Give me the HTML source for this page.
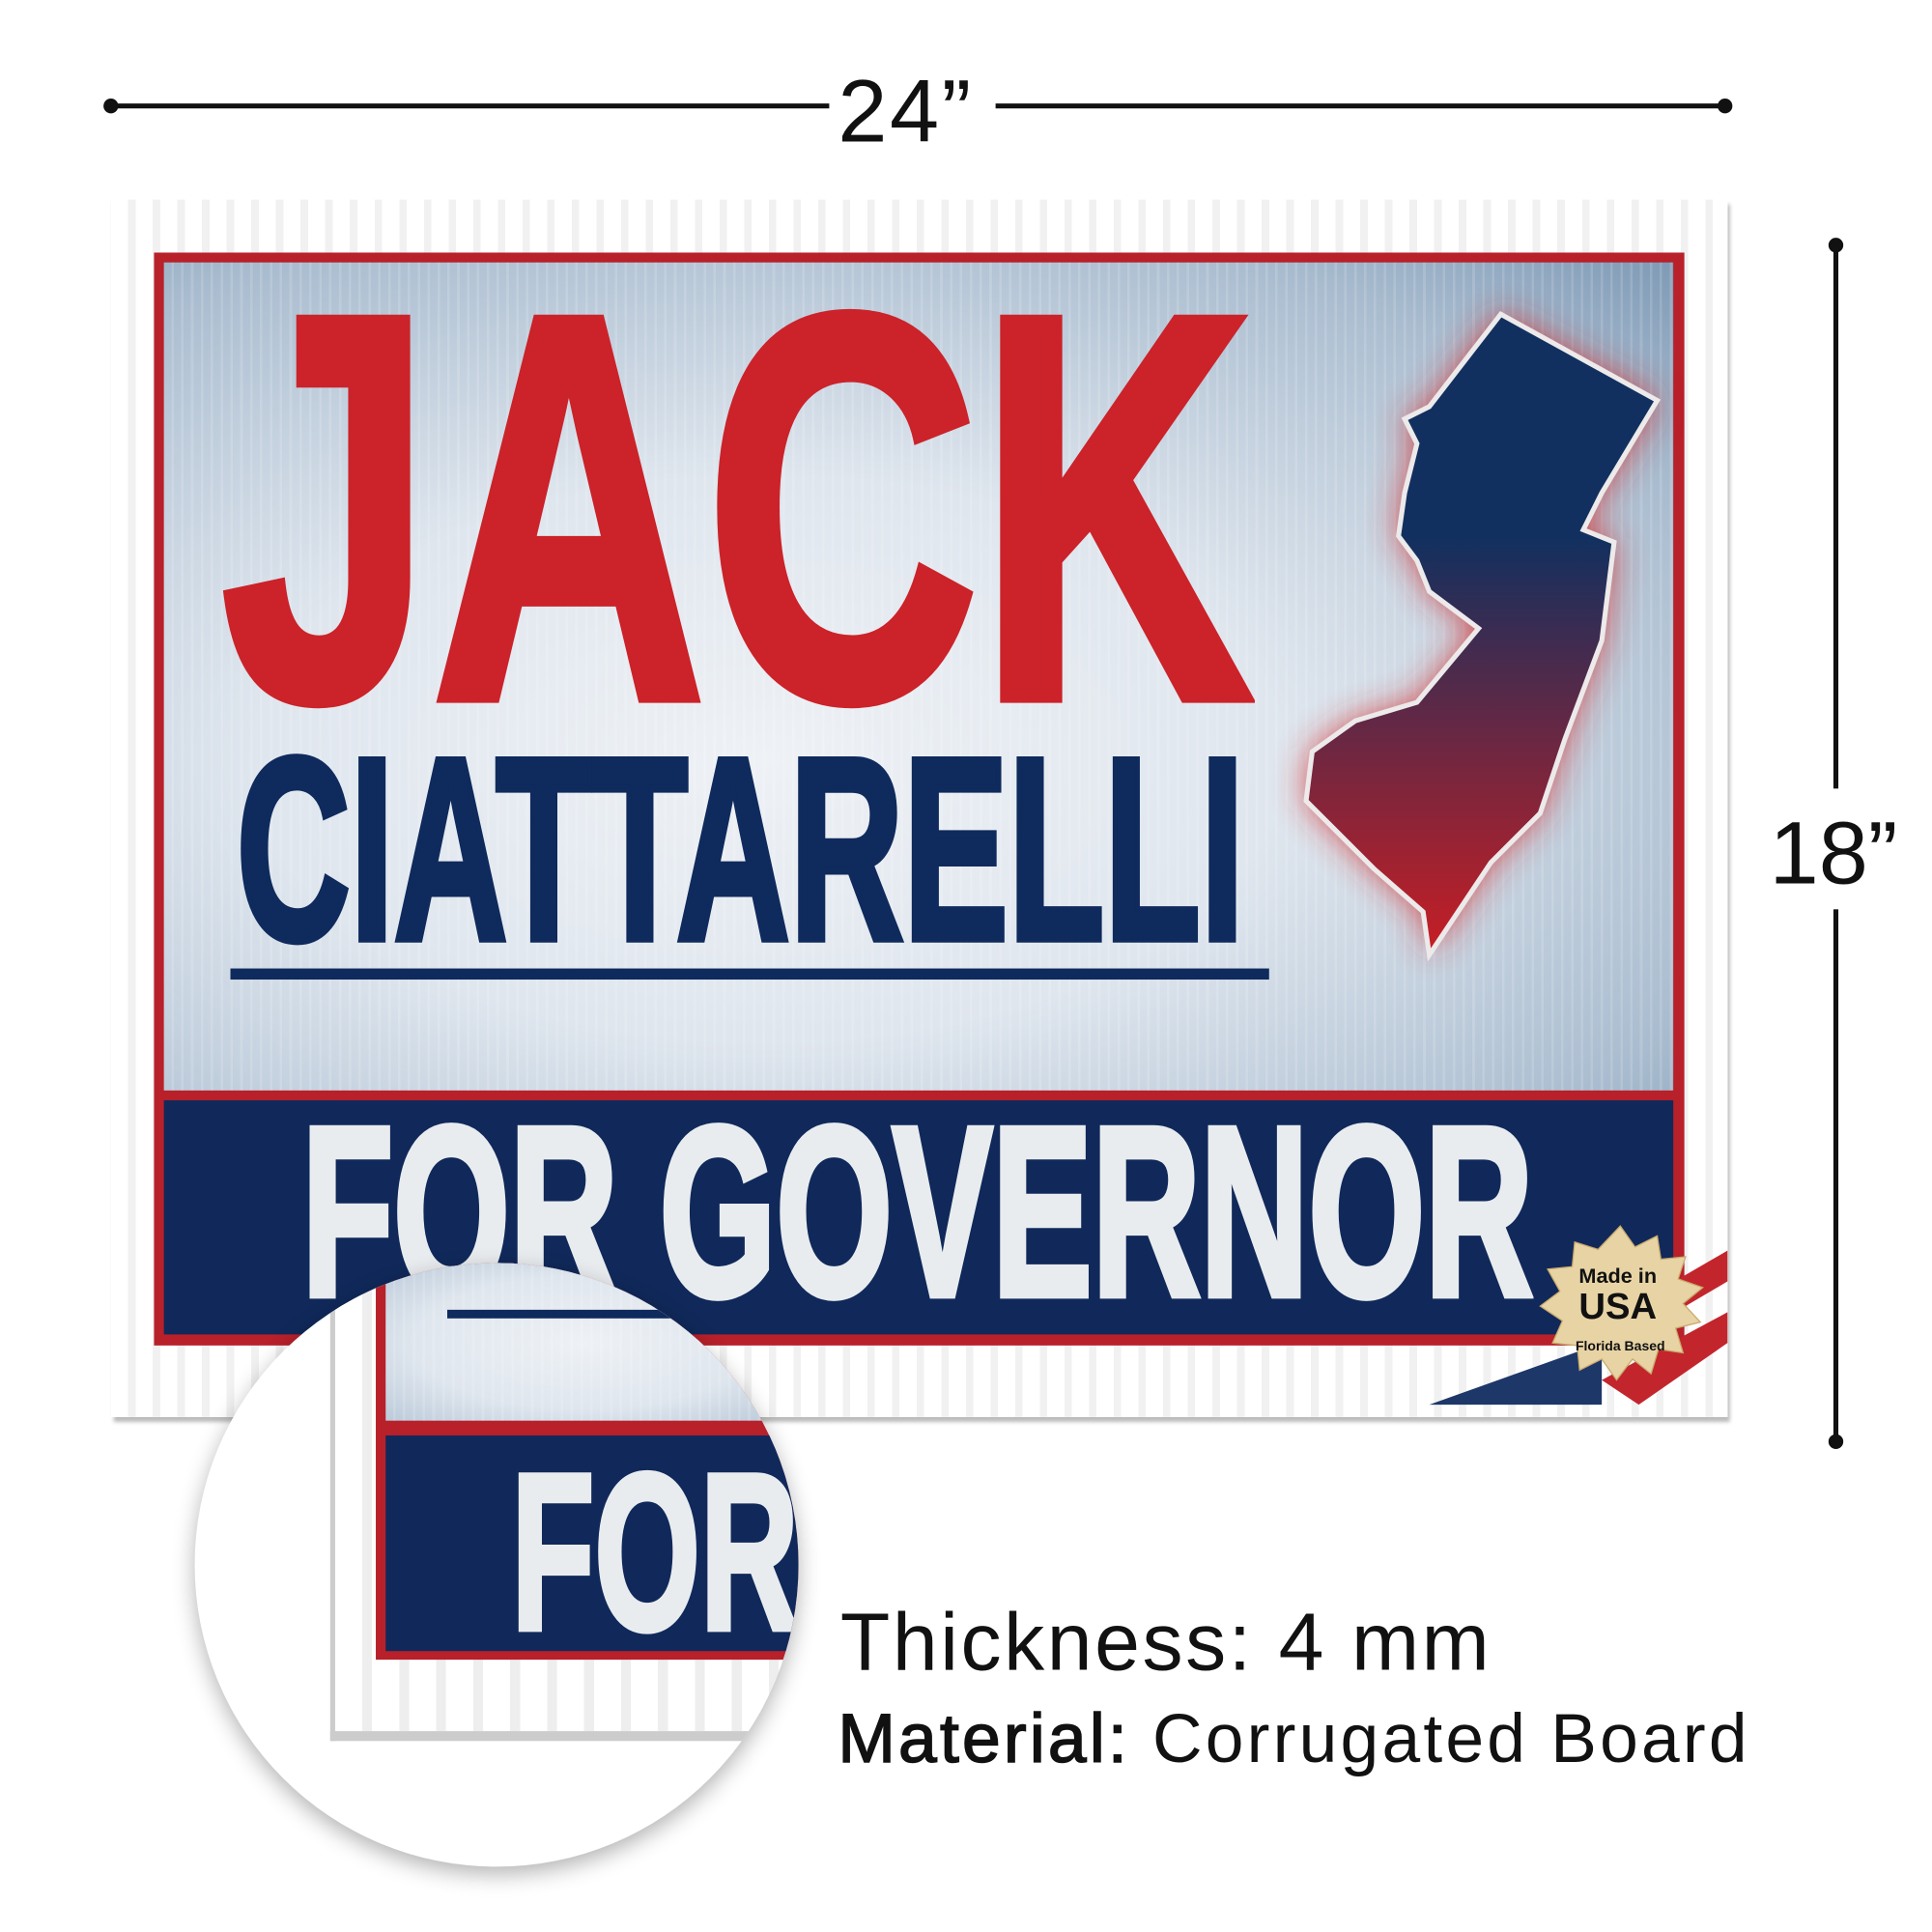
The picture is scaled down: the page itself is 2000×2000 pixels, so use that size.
<!DOCTYPE html>
<html><head><meta charset="utf-8"><style>
html,body{margin:0;padding:0;background:#fff;}
#root{position:relative;width:1568px;height:1568px;transform:scale(1.27551);transform-origin:0 0;overflow:hidden;font-family:"Liberation Sans",sans-serif;}
.abs{position:absolute;}
.big{font-weight:bold;white-space:nowrap;transform-origin:0 0;line-height:1;}
.tex{background:
 repeating-linear-gradient(90deg,rgba(255,255,255,0.0) 0 6px,rgba(255,255,255,0.15) 6px 8px),
 radial-gradient(ellipse at 40% 60%,#eef1f5 0%,#dfe6ee 40%,#a9bccf 80%,#7f9ab6 100%);}
</style></head><body><div id="root">

<div class="abs" style="left:88px;top:84px;width:585px;height:4px;background:#111"></div>
<div class="abs" style="left:808px;top:84px;width:594px;height:4px;background:#111"></div>
<div class="abs" style="left:84px;top:80px;width:12px;height:12px;border-radius:50%;background:#111"></div>
<div class="abs" style="left:1394px;top:80px;width:12px;height:12px;border-radius:50%;background:#111"></div>
<div class="abs" style="left:680px;top:50px;font-size:72px;color:#111;letter-spacing:2px;">24”</div>

<div class="abs" style="left:1488px;top:198px;width:4px;height:442px;background:#111"></div>
<div class="abs" style="left:1488px;top:738px;width:4px;height:432px;background:#111"></div>
<div class="abs" style="left:1484px;top:193px;width:12px;height:12px;border-radius:50%;background:#111"></div>
<div class="abs" style="left:1484px;top:1164px;width:12px;height:12px;border-radius:50%;background:#111"></div>
<div class="abs" style="left:1436px;top:652px;font-size:72px;color:#111;">18”</div>

<div class="abs" style="left:90px;top:162px;width:1312px;height:988px;background:repeating-linear-gradient(90deg,#fff 0 14px,#f1f1f1 14px 20px);box-shadow:2px 4px 3px #bbb;"></div>
<div class="abs" style="left:125px;top:205px;width:1242px;height:887px;background:#b8202a;"></div>
<div class="abs tex" style="left:133px;top:213px;width:1225px;height:672px;"></div>
<div class="abs" style="left:133px;top:893px;width:1225px;height:190px;background:#10295a;"></div>

<div class="abs big" style="left:180px;top:190px;font-size:445px;color:#cc2229;-webkit-text-stroke:9px #cc2229;transform:scaleX(0.69);">JACK</div>
<div class="abs big" style="left:192px;top:584px;font-size:211px;color:#0f2a5c;-webkit-text-stroke:6px #0f2a5c;transform:scaleX(0.605);">CIATTARELLI</div>
<div class="abs" style="left:187px;top:786px;width:843px;height:9px;background:#0f2a5c"></div>
<div class="abs big" style="left:245px;top:886px;font-size:196px;color:#e9ecef;-webkit-text-stroke:6px #e9ecef;transform:scaleX(0.62);">FOR GOVERNOR</div>

<svg class="abs" style="left:0;top:0" width="1568" height="1568">
<defs>
<linearGradient id="nj" x1="0" y1="0" x2="0" y2="1"><stop offset="0.35" stop-color="#12305f"/><stop offset="1" stop-color="#c81e24"/></linearGradient>
<filter id="bl"><feGaussianBlur stdDeviation="14"/></filter>
</defs>
<polygon filter="url(#bl)" fill="#d32a2a" opacity="0.85" points="1218,255 1345,325 1300,400 1285,430 1310,440 1300,520 1270,600 1250,660 1210,700 1160,775 1155,740 1115,705 1060,650 1065,610 1100,585 1150,570 1200,510 1160,480 1150,455 1135,435 1140,400 1150,360 1140,340 1160,330"/>
<polygon fill="url(#nj)" stroke="#eceaea" stroke-width="4" points="1218,255 1345,325 1300,400 1285,430 1310,440 1300,520 1270,600 1250,660 1210,700 1160,775 1155,740 1115,705 1060,650 1065,610 1100,585 1150,570 1200,510 1160,480 1150,455 1135,435 1140,400 1150,360 1140,340 1160,330"/>
<polygon points="1160,1140 1300,1090 1300,1140" fill="#1d3768"/>
<polygon points="1290,1080 1402,1015 1402,1040 1300,1100" fill="#c3252d"/>
<polygon points="1300,1120 1402,1065 1402,1090 1330,1140" fill="#c3252d"/>
<polygon fill="#e7d3a4" stroke="#c9a96b" stroke-width="1" points="1315,995 1327,1012 1345,1003 1348,1022 1368,1020 1362,1038 1382,1045 1366,1058 1380,1073 1360,1078 1366,1098 1346,1095 1340,1115 1325,1103 1312,1120 1300,1103 1282,1112 1280,1092 1260,1090 1268,1072 1250,1060 1266,1048 1256,1030 1276,1028 1278,1008 1297,1014"/>
<text x="1313" y="1041" font-family="Liberation Sans" font-weight="bold" font-size="17" text-anchor="middle" fill="#111">Made in</text>
<text x="1313" y="1070" font-family="Liberation Sans" font-weight="bold" font-size="30" text-anchor="middle" fill="#111">USA</text>
<text x="1315" y="1096" font-family="Liberation Sans" font-weight="bold" font-size="11" text-anchor="middle" fill="#111">Florida Based</text>
</svg>

<div class="abs" style="left:158px;top:1025px;width:490px;height:490px;border-radius:50%;background:#fff;box-shadow:0 6px 18px rgba(0,0,0,0.3);overflow:hidden;">
  <div class="abs" style="left:110px;top:-30px;width:500px;height:410px;background:repeating-linear-gradient(90deg,#fff 0 22px,#eee 22px 30px);border-left:4px solid #ccc;border-bottom:8px solid #ccc;"></div>
  <div class="abs" style="left:147px;top:-30px;width:400px;height:352px;background:#b8202a;"></div>
  <div class="abs tex" style="left:155px;top:-30px;width:400px;height:158px;"></div>
  <div class="abs" style="left:205px;top:38px;width:300px;height:7px;background:#0f2a5c"></div>
  <div class="abs" style="left:155px;top:140px;width:400px;height:175px;background:#10295a;"></div>
  <div class="abs big" style="left:257px;top:145px;font-size:181px;color:#e9ecef;-webkit-text-stroke:5px #e9ecef;transform:scaleX(0.61);">FOR</div>
</div>

<div class="abs" style="left:682px;top:1294px;font-size:66px;color:#111;white-space:nowrap;letter-spacing:2px;">Thickness: 4 mm</div>
<div class="abs" style="left:680px;top:1378px;font-size:56px;color:#111;white-space:nowrap;letter-spacing:2.5px;"><span style="-webkit-text-stroke:1.2px #111">Material:</span> Corrugated Board</div>

</div></body></html>
